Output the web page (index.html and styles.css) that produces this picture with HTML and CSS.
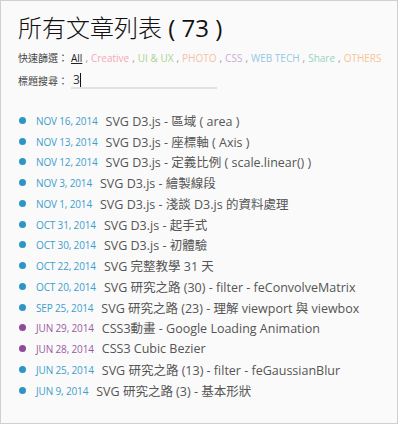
FILE: index.html
```html
<!DOCTYPE html>
<html>
<head>
<meta charset="utf-8">
<link rel="stylesheet" href="styles.css">
</head>
<body>
<div class="panel">
  <h1 class="title"><span class="cjk">所有文章列表</span> ( 73 )</h1>
  <div class="filters">
    <span class="label">快速篩選：</span>
    <a class="f all">All</a><span class="sep">,</span>
    <a class="f creative">Creative</a><span class="sep">,</span>
    <a class="f uiux">UI &amp; UX</a><span class="sep">,</span>
    <a class="f photo">PHOTO</a><span class="sep">,</span>
    <a class="f css">CSS</a><span class="sep">,</span>
    <a class="f web">WEB TECH</a><span class="sep">,</span>
    <a class="f share">Share</a><span class="sep">,</span>
    <a class="f others">OTHERS</a>
  </div>
  <div class="search">
    <span class="label">標題搜尋：</span>
    <div class="input"><span>3</span><span class="caret"></span></div>
  </div>
  <ul class="list">
    <li><span class="dot"></span><span class="date">Nov 16, 2014</span><span class="name">SVG D3.js - 區域 ( area )</span></li>
    <li><span class="dot"></span><span class="date">Nov 13, 2014</span><span class="name">SVG D3.js - 座標軸 ( Axis )</span></li>
    <li><span class="dot"></span><span class="date">Nov 12, 2014</span><span class="name">SVG D3.js - 定義比例 ( scale.linear() )</span></li>
    <li><span class="dot"></span><span class="date">Nov 3, 2014</span><span class="name">SVG D3.js - 繪製線段</span></li>
    <li><span class="dot"></span><span class="date">Nov 1, 2014</span><span class="name">SVG D3.js - 淺談 D3.js 的資料處理</span></li>
    <li><span class="dot"></span><span class="date">Oct 31, 2014</span><span class="name">SVG D3.js - 起手式</span></li>
    <li><span class="dot"></span><span class="date">Oct 30, 2014</span><span class="name">SVG D3.js - 初體驗</span></li>
    <li><span class="dot"></span><span class="date">Oct 22, 2014</span><span class="name">SVG 完整教學 31 天</span></li>
    <li><span class="dot"></span><span class="date">Oct 20, 2014</span><span class="name">SVG 研究之路 (30) - filter - feConvolveMatrix</span></li>
    <li><span class="dot"></span><span class="date">Sep 25, 2014</span><span class="name">SVG 研究之路 (23) - 理解 viewport 與 viewbox</span></li>
    <li class="purple"><span class="dot"></span><span class="date">Jun 29, 2014</span><span class="name">CSS3動畫 - Google Loading Animation</span></li>
    <li class="purple"><span class="dot"></span><span class="date">Jun 28, 2014</span><span class="name">CSS3 Cubic Bezier</span></li>
    <li><span class="dot"></span><span class="date">Jun 25, 2014</span><span class="name">SVG 研究之路 (13) - filter - feGaussianBlur</span></li>
    <li><span class="dot"></span><span class="date">Jun 9, 2014</span><span class="name">SVG 研究之路 (3) - 基本形狀</span></li>
  </ul>
</div>
</body>
</html>
```
FILE: styles.css
```css
html, body {
  margin: 0;
  padding: 0;
  background: #ffffff;
}
body {
  font-family: "Open Sans", "Noto Sans CJK TC", sans-serif;
  color: #555;
}
.panel {
  box-sizing: border-box;
  width: 398px;
  height: 424px;
  border: 1px solid #cfcfcf;
  background: #fafafa;
  padding: 10px 0 0 17px;
}
.title {
  margin: 0;
  font-size: 24px;
  font-weight: 400;
  line-height: 32px;
  color: #111;
  font-family: "Open Sans", "Noto Sans CJK TC", sans-serif;
}
.title .cjk {
  font-family: "Noto Sans CJK TC", sans-serif;
  font-weight: 300;
}
.filters {
  margin-top: 4px;
  display: flex;
  align-items: center;
  font-size: 10px;
  line-height: 20px;
  white-space: nowrap;
}
.label {
  color: #444;
  font-family: "Noto Sans CJK TC", sans-serif;
  font-size: 10px;
  width: 53px;
  flex: none;
  white-space: nowrap;
  line-height: 20px;
}
.sep {
  color: #999;
  margin: 0 3px 0 3px;
}
.f { text-decoration: none; }
.all { color: #222; text-decoration: underline; }
.creative { color: #f4a9b8; }
.uiux { color: #a9d393; }
.photo { color: #f7bfa8; }
.css { color: #c9aed6; }
.web { color: #94c9e2; }
.share { color: #98d4bd; }
.others { color: #f7c595; }
.search {
  margin-top: 3px;
  display: flex;
  align-items: flex-start;
  height: 20px;
}
.input {
  width: 146px;
  height: 18px;
  border-bottom: 2px solid #e2e2e2;
  font-size: 12px;
  line-height: 16px;
  color: #333;
  display: flex;
  align-items: center;
  padding: 2px 0 0 2px;
  box-sizing: border-box;
}
.caret {
  display: inline-block;
  width: 1px;
  height: 14px;
  background: #111;
}
.list {
  list-style: none;
  margin: 19px 0 0 0;
  padding: 0;
}
.list li {
  display: flex;
  align-items: center;
  height: 20.75px;
  white-space: nowrap;
}
.dot {
  width: 7px;
  height: 7px;
  border-radius: 50%;
  background: #2b97c6;
  margin: 0 10px 0 1px;
  flex: none;
}
.date {
  font-size: 10px;
  text-transform: uppercase;
  color: #3d9fcd;
  margin-right: 8px;
  padding-top: 1px;
  letter-spacing: -0.15px;
}
.name {
  font-size: 12.5px;
  color: #555;
}
.purple .dot { background: #8e4b98; }
.purple .date { color: #9a5aa3; }
```
